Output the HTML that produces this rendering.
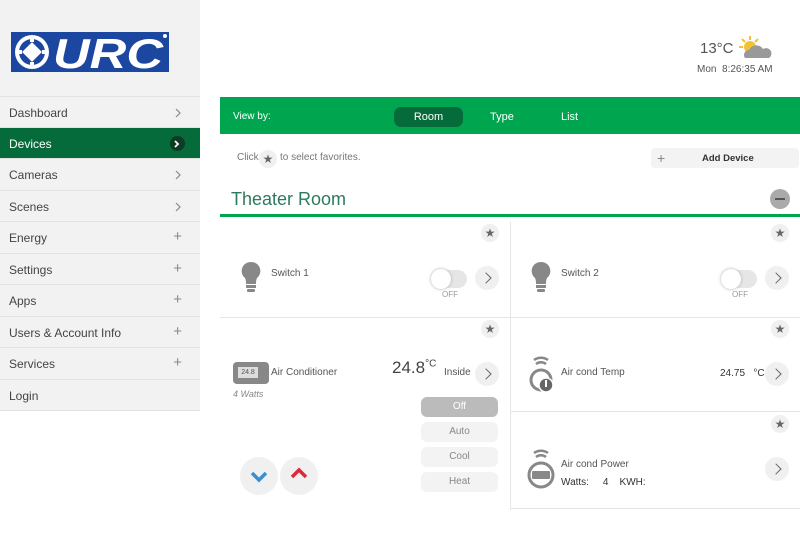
<!DOCTYPE html>
<html><head><meta charset="utf-8"><style>
*{margin:0;padding:0;box-sizing:border-box}
body{width:800px;height:534px;overflow:hidden;background:#fff;font-family:"Liberation Sans",sans-serif;color:#444;position:relative}
.a{position:absolute}
#side{left:0;top:0;width:200px;height:411px;background:#f2f2f2}
.mi{position:absolute;left:0;width:200px;height:31px;border-top:1px solid #e2e2e2;font-size:12px;color:#444;padding:9px 0 0 9px}
.mi .r{position:absolute;right:18px;top:6px;font-size:15px;color:#888}
.mi svg{position:absolute;right:19px;top:11px}
.mi.act{background:#066b3a;color:#fff}
.mi.act .c{position:absolute;right:15px;top:8px;background:#0d3b23;border-radius:50%;width:15px;height:15px}
.star{position:absolute;width:18px;height:18px;border-radius:50%;background:#f0f0f0;color:#666;font-size:12px;text-align:center;line-height:18px}
.arr{position:absolute;width:24px;height:24px;border-radius:50%;background:#f0f0f0}
.arr::after{content:"";position:absolute;left:7px;top:8px;width:7px;height:7px;border-right:1.5px solid #666;border-top:1.5px solid #666;transform:rotate(45deg)}
.t{position:absolute;font-size:10px;color:#555;white-space:nowrap}
.btn{position:absolute;left:421px;width:77px;height:20px;border-radius:6px;background:#f3f3f3;font-size:10px;color:#888;text-align:center;line-height:20px}
</style></head><body>
<div id="side" class="a">
 <svg class="a" style="left:11px;top:32px" width="158" height="40" viewBox="0 0 158 40">
  <rect width="158" height="40" fill="#1c47a0"/>
  <circle cx="21" cy="20" r="17" fill="#fff"/><circle cx="21" cy="20" r="13" fill="#1c47a0"/>
  <rect x="14" y="13" width="14" height="14" fill="#fff" transform="rotate(45 21 20)"/>
  <rect x="19" y="4" width="4" height="6" fill="#fff"/><rect x="19" y="30" width="4" height="6" fill="#fff"/><rect x="5" y="18" width="6" height="4" fill="#fff"/><rect x="31" y="18" width="6" height="4" fill="#fff"/>
  <text x="42" y="36" font-family="Liberation Sans" font-weight="bold" font-style="italic" font-size="42" fill="#fff" textLength="110" lengthAdjust="spacingAndGlyphs">URC</text>
  <circle cx="154" cy="4" r="2" fill="#fff"/>
 </svg>
 <div class="mi" style="top:96px">Dashboard<svg width="6" height="10"><path d="M1 1l4 4-4 4" stroke="#888" fill="none" stroke-width="1.2"/></svg></div>
 <div class="mi act" style="top:127px">Devices<span class="c"><svg style="right:5px;top:4px" width="6" height="8"><path d="M1 1l3 3-3 3" stroke="#fff" fill="none" stroke-width="1.8"/></svg></span></div>
 <div class="mi" style="top:158px">Cameras<svg width="6" height="10"><path d="M1 1l4 4-4 4" stroke="#888" fill="none" stroke-width="1.2"/></svg></div>
 <div class="mi" style="top:190px">Scenes<svg width="6" height="10"><path d="M1 1l4 4-4 4" stroke="#888" fill="none" stroke-width="1.2"/></svg></div>
 <div class="mi" style="top:221px">Energy<span class="r">+</span></div>
 <div class="mi" style="top:253px">Settings<span class="r">+</span></div>
 <div class="mi" style="top:284px">Apps<span class="r">+</span></div>
 <div class="mi" style="top:316px">Users &amp; Account Info<span class="r">+</span></div>
 <div class="mi" style="top:347px">Services<span class="r">+</span></div>
 <div class="mi" style="top:379px;border-bottom:1px solid #e2e2e2;height:32px">Login</div>
</div>
<div class="t" style="left:700px;top:40px;font-size:15px;color:#555">13°C</div>
<svg class="a" style="left:738px;top:35px" width="34" height="26"><g stroke="#f5c033" stroke-width="2"><path d="M12 1v4M4 4l3 3M1 12h4M20 4l-3 3"/></g><circle cx="12" cy="12" r="6" fill="#f5c033"/><path d="M7 23 a5 5 0 0 1 4-8 a8 8 0 0 1 14-1 a5 5 0 0 1 6 9z" fill="#999"/></svg>
<div class="t" style="left:697px;top:64px;font-size:10px">Mon&nbsp; 8:26:35 AM</div>
<div class="a" style="left:220px;top:97px;width:580px;height:37px;background:#00a54f"></div>
<div class="t" style="left:233px;top:111px;color:#fff;font-size:10px">View by:</div>
<div class="a" style="left:394px;top:107px;width:69px;height:20px;border-radius:7px;background:#066b3a;color:#fff;font-size:11px;text-align:center;line-height:20px">Room</div>
<div class="t" style="left:490px;top:111px;color:#fff;font-size:11px">Type</div>
<div class="t" style="left:561px;top:111px;color:#fff;font-size:11px">List</div>
<div class="t" style="left:237px;top:152px;color:#777">Click</div>
<div class="star" style="left:259px;top:150px">★</div>
<div class="t" style="left:280px;top:152px;color:#777">to select favorites.</div>
<div class="a" style="left:651px;top:148px;width:148px;height:20px;background:#f3f3f3;border-radius:4px"></div>
<div class="t" style="left:657px;top:150px;font-size:14px;color:#888">+</div>
<div class="t" style="left:702px;top:153px;font-weight:bold;color:#333;font-size:9.5px">Add Device</div>
<div class="t" style="left:231px;top:189px;font-size:18px;color:#2d7a5c">Theater Room</div>
<div class="a" style="left:770px;top:189px;width:20px;height:20px;border-radius:50%;background:#aaa"><div class="a" style="left:5px;top:9px;width:10px;height:2px;background:#555"></div></div>
<div class="a" style="left:220px;top:214px;width:580px;height:3px;background:#00a54f"></div>
<div class="a" style="left:510px;top:222px;width:1px;height:288px;background:#e5e5e5"></div>
<div class="a" style="left:220px;top:317px;width:580px;height:1px;background:#e5e5e5"></div>
<div class="a" style="left:511px;top:411px;width:289px;height:1px;background:#e5e5e5"></div>
<div class="a" style="left:511px;top:508px;width:289px;height:1px;background:#e5e5e5"></div>
<!-- switch 1 -->
<div class="star" style="left:481px;top:224px">★</div>
<svg class="a" style="left:240px;top:261px" width="22" height="32"><path d="M11 1a9 9 0 0 0-6 16c1 2 1 4 1 6h10c0-2 0-4 1-6a9 9 0 0 0-6-16z" fill="#888"/><rect x="6" y="24" width="10" height="3" fill="#888"/><rect x="7" y="28" width="8" height="3" rx="1" fill="#888"/></svg>
<div class="t" style="left:271px;top:268px">Switch 1</div>
<div class="a" style="left:432px;top:270px;width:35px;height:18px;border-radius:9px;background:#e6e6e6"></div>
<div class="a" style="left:431px;top:269px;width:20px;height:20px;border-radius:50%;background:#fff;box-shadow:0 0 3px #aaa"></div>
<div class="t" style="left:442px;top:290px;font-size:8px;color:#999">OFF</div>
<div class="arr" style="left:475px;top:266px"></div>
<!-- switch 2 -->
<div class="star" style="left:771px;top:224px">★</div>
<svg class="a" style="left:530px;top:261px" width="22" height="32"><path d="M11 1a9 9 0 0 0-6 16c1 2 1 4 1 6h10c0-2 0-4 1-6a9 9 0 0 0-6-16z" fill="#888"/><rect x="6" y="24" width="10" height="3" fill="#888"/><rect x="7" y="28" width="8" height="3" rx="1" fill="#888"/></svg>
<div class="t" style="left:561px;top:268px">Switch 2</div>
<div class="a" style="left:722px;top:270px;width:35px;height:18px;border-radius:9px;background:#e6e6e6"></div>
<div class="a" style="left:721px;top:269px;width:20px;height:20px;border-radius:50%;background:#fff;box-shadow:0 0 3px #aaa"></div>
<div class="t" style="left:732px;top:290px;font-size:8px;color:#999">OFF</div>
<div class="arr" style="left:765px;top:266px"></div>
<!-- AC -->
<div class="star" style="left:481px;top:320px">★</div>
<div class="a" style="left:233px;top:362px;width:36px;height:22px;border-radius:4px;background:#888"><div class="a" style="left:5px;top:5px;width:20px;height:11px;background:#ddd;font-size:7px;color:#555;text-align:center;line-height:11px">24.8</div></div>
<div class="t" style="left:271px;top:367px">Air Conditioner</div>
<div class="t" style="left:233px;top:389px;font-style:italic;color:#888;font-size:9px">4 Watts</div>
<div class="t" style="left:392px;top:358px;font-size:17px;color:#444">24.8<sup style="font-size:10px">°C</sup></div>
<div class="t" style="left:444px;top:367px">Inside</div>
<div class="arr" style="left:475px;top:362px"></div>
<div class="btn" style="top:397px;background:#bbb;color:#fff">Off</div>
<div class="btn" style="top:422px">Auto</div>
<div class="btn" style="top:447px">Cool</div>
<div class="btn" style="top:472px">Heat</div>
<div class="a" style="left:240px;top:457px;width:38px;height:38px;border-radius:50%;background:#f0f0f0"></div>
<svg class="a" style="left:249px;top:470px" width="20" height="14"><path d="M3 3l7 7 7-7" stroke="#3a8fd0" stroke-width="3.5" fill="none"/></svg>
<div class="a" style="left:280px;top:457px;width:38px;height:38px;border-radius:50%;background:#f0f0f0"></div>
<svg class="a" style="left:289px;top:466px" width="20" height="14"><path d="M3 11l7-7 7 7" stroke="#e0283a" stroke-width="3.5" fill="none"/></svg>
<!-- Temp -->
<div class="star" style="left:771px;top:320px">★</div>
<svg class="a" style="left:526px;top:354px" width="32" height="40"><path d="M8 6a12 12 0 0 1 14 0M10 10a8 8 0 0 1 10 0" stroke="#888" stroke-width="2.5" fill="none"/><circle cx="15" cy="26" r="10" stroke="#888" stroke-width="3" fill="none"/><circle cx="20" cy="31" r="7" fill="#666" stroke="#fff" stroke-width="1.5"/><rect x="19" y="26" width="2" height="7" fill="#fff"/></svg>
<div class="t" style="left:561px;top:367px">Air cond Temp</div>
<div class="t" style="left:720px;top:368px;color:#333">24.75 &nbsp; °C</div>
<div class="arr" style="left:765px;top:362px"></div>
<!-- Power -->
<div class="star" style="left:771px;top:415px">★</div>
<svg class="a" style="left:526px;top:447px" width="32" height="44"><path d="M8 6a12 12 0 0 1 14 0M10 10a8 8 0 0 1 10 0" stroke="#888" stroke-width="2.5" fill="none"/><circle cx="15" cy="28" r="12" stroke="#888" stroke-width="3" fill="none"/><rect x="6" y="24" width="18" height="8" rx="1" fill="#888"/></svg>
<div class="t" style="left:561px;top:459px">Air cond Power</div>
<div class="t" style="left:561px;top:477px;color:#333">Watts: &nbsp;&nbsp;&nbsp; 4 &nbsp;&nbsp; KWH:</div>
<div class="arr" style="left:765px;top:457px"></div>
</body></html>
